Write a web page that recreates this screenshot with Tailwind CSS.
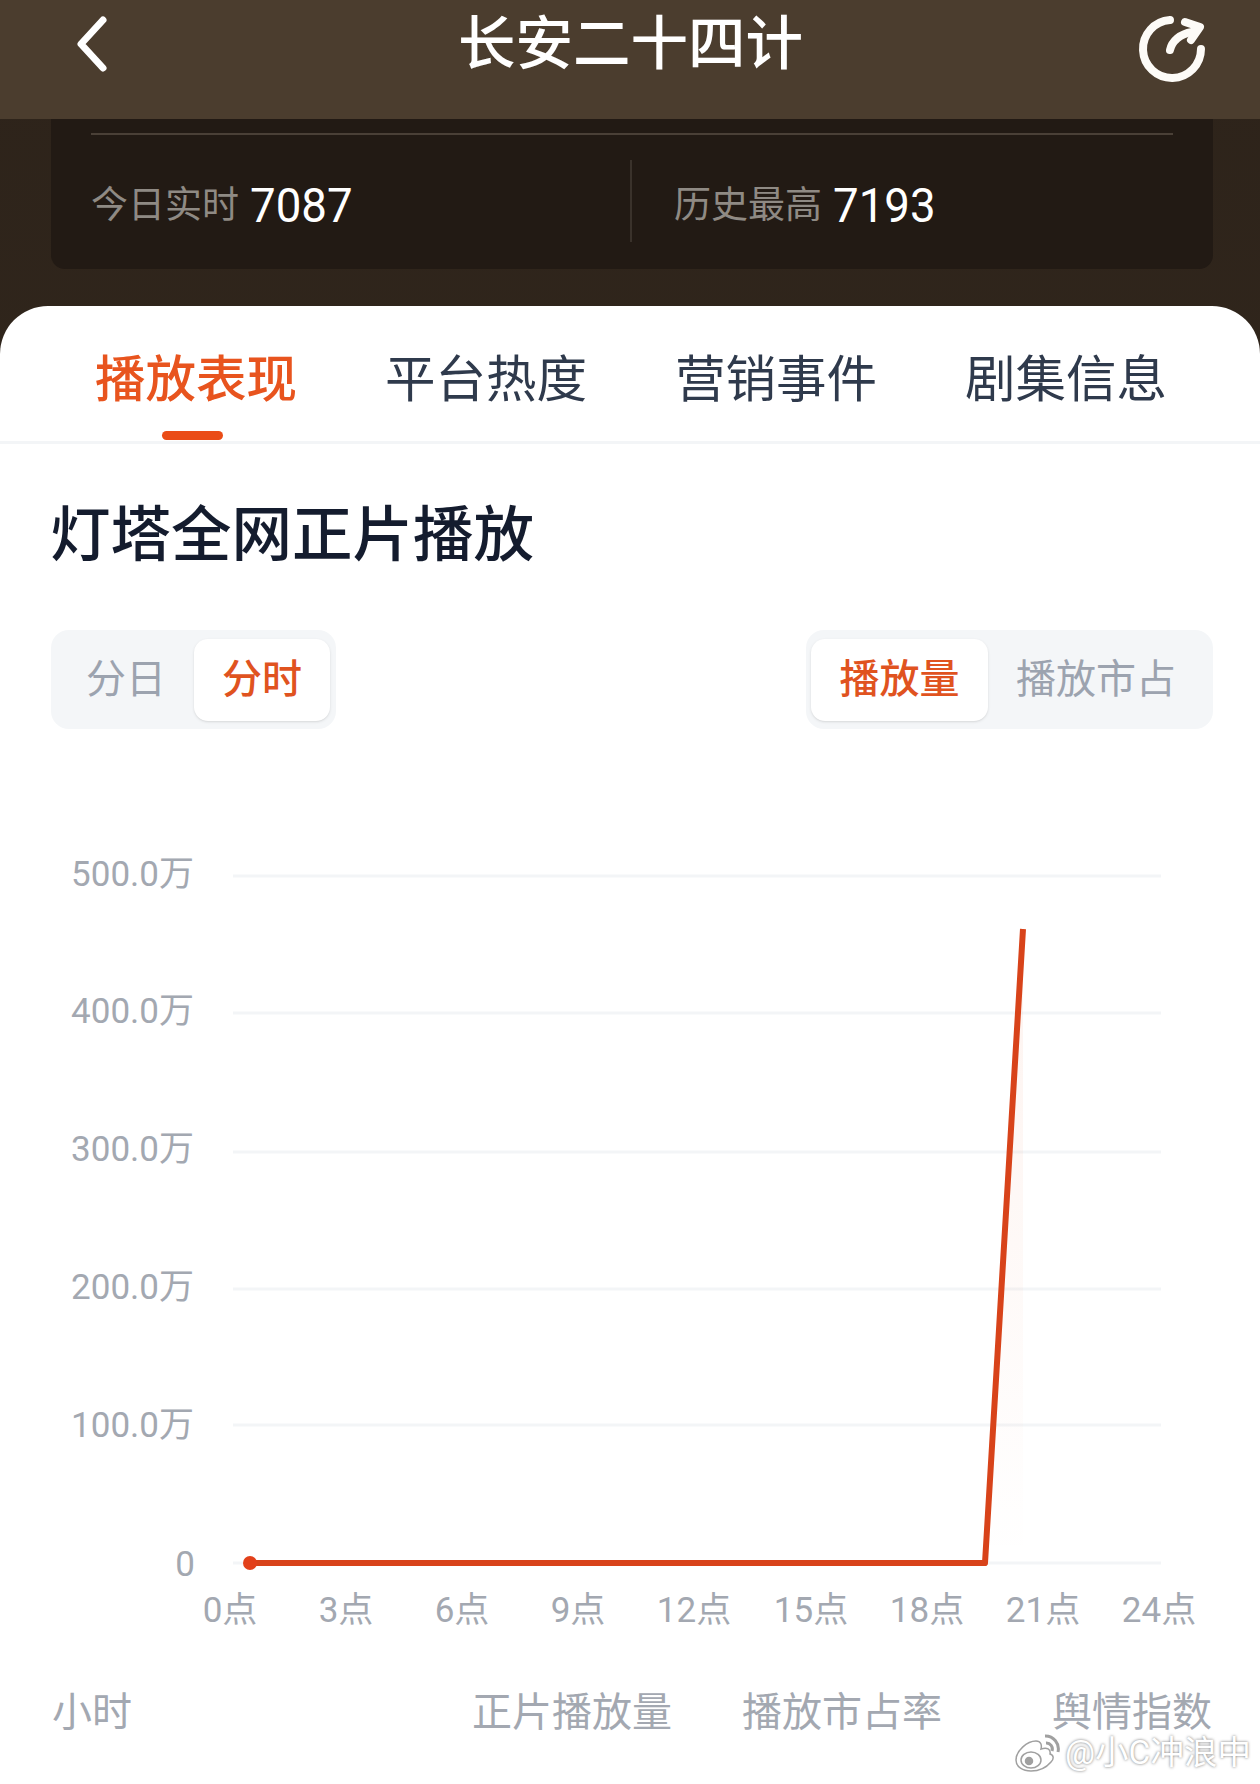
<!DOCTYPE html>
<html lang="zh-CN">
<head>
  <meta charset="UTF-8">
  <title>长安二十四计</title>
  <script src="https://cdn.jsdelivr.net/npm/@tailwindcss/browser@4"></script>
</head>
<body class="font-['Roboto','Noto_Sans_CJK_SC',sans-serif]">
  <div class="relative w-[1260px] h-[1784px] overflow-hidden bg-gradient-to-b from-[#2d231a] to-[#3a2e22]">

    <!-- header -->
    <header class="relative z-10 h-[119px] bg-[#4b3d2e] flex items-start justify-between pl-[75px] pr-[52px] text-white">
      <svg class="mt-[15px]" width="34" height="58" viewBox="0 0 34 58" fill="none" stroke="#fff" stroke-width="7" stroke-linecap="round" stroke-linejoin="round"><path d="M28 5 L6 29 L28 53"/></svg>
      <h1 class="mt-[12px] ml-[16px] text-[57.5px] leading-[66px] font-medium">长安二十四计</h1>
      <svg class="mt-[13px]" width="72" height="72" viewBox="0 0 72 72" fill="none" stroke="#fdfbf7" stroke-width="8" stroke-linecap="round" stroke-linejoin="round"><path d="M34 7 A29 29 0 1 0 65 36"/><path d="M34 37 C36 28 44 21 56 19"/><path d="M49 9 L64 14 L55 27"/></svg>
    </header>

    <!-- stats card -->
    <section class="ml-[51px] mr-[47px] h-[150px] bg-[#221a14] rounded-b-[14px] px-[40px]">
      <div class="h-[16px] border-b-2 border-[#4a4037]"></div>
      <div class="flex items-center h-[134px] pb-[2px]">
        <div class="flex items-center w-[541px] h-[82px] pt-[10px] border-r-2 border-[#3a322b]">
          <span class="text-[37px] text-[#8f8a84]">今日实时</span>
          <span class="ml-[11px] text-[48px] leading-none text-white scale-x-95 origin-left">7087</span>
        </div>
        <div class="flex items-center h-[82px] pt-[10px] pl-[42px]">
          <span class="text-[37px] text-[#8f8a84]">历史最高</span>
          <span class="ml-[11px] text-[48px] leading-none text-white scale-x-95 origin-left">7193</span>
        </div>
      </div>
    </section>

    <!-- white panel -->
    <main class="mt-[37px] h-[1478px] bg-white rounded-t-[48px]">
      <nav class="relative h-[138px] border-b-[3px] border-[#f3f5f7] flex items-center pl-[95px] gap-[88px] text-[50.5px] text-[#2f3a4c] pt-[12px]">
        <span class="text-[#e8541e] font-medium">播放表现</span>
        <span>平台热度</span>
        <span>营销事件</span>
        <span>剧集信息</span>
        <div class="absolute left-[162px] bottom-[1px] w-[61px] h-[9px] rounded-full bg-[#ea4c17]"></div>
      </nav>

      <h2 class="mt-[52px] ml-[50px] text-[60.5px] leading-[80px] font-medium text-[#141c2e]">灯塔全网正片播放</h2>

      <div class="mt-[54px] ml-[51px] mr-[47px] flex justify-between text-[40px] text-[#9ca3af]">
        <div class="flex items-center w-[285px] h-[99px] rounded-[18px] bg-[#f4f6f8] pl-[35px]">
          <span>分日</span>
          <span class="ml-[28px] w-[136px] h-[82px] flex items-center justify-center rounded-[14px] bg-white shadow-sm text-[#e0531f] font-medium">分时</span>
        </div>
        <div class="flex items-center w-[407px] h-[99px] rounded-[18px] bg-[#f4f6f8] pl-[5px]">
          <span class="w-[177px] h-[82px] flex items-center justify-center rounded-[14px] bg-white shadow-sm text-[#e0531f] font-medium">播放量</span>
          <span class="ml-[28px]">播放市占</span>
        </div>
      </div>

      <!-- chart -->
      <svg class="mt-[118px] block" width="1260" height="802" viewBox="0 848 1260 802">
        <defs>
          <linearGradient id="area" x1="0" y1="0" x2="0" y2="1">
            <stop offset="0" stop-color="#e8541e" stop-opacity="0.07"/>
            <stop offset="1" stop-color="#e8541e" stop-opacity="0"/>
          </linearGradient>
        </defs>
        <g stroke="#f3f5f7" stroke-width="3">
          <line x1="233" x2="1161" y1="877" y2="877"/>
          <line x1="233" x2="1161" y1="1014" y2="1014"/>
          <line x1="233" x2="1161" y1="1153" y2="1153"/>
          <line x1="233" x2="1161" y1="1290" y2="1290"/>
          <line x1="233" x2="1161" y1="1426" y2="1426"/>
          <line x1="233" x2="1161" y1="1564" y2="1564"/>
        </g>
        <path d="M985 1564 L1023 930 L1023 1564 Z" fill="url(#area)"/>
        <path d="M249 1564 L985 1564 L1023 930" fill="none" stroke="#d8431a" stroke-width="6" stroke-linejoin="round"/>
        <circle cx="250" cy="1564" r="7" fill="#e2401a"/>
        <g fill="#a3a8b1" font-size="35" text-anchor="end">
          <text x="194" y="887">500.0万</text>
          <text x="194" y="1024">400.0万</text>
          <text x="194" y="1162">300.0万</text>
          <text x="194" y="1300">200.0万</text>
          <text x="194" y="1438">100.0万</text>
          <text x="195" y="1577">0</text>
        </g>
        <g fill="#a3a8b1" font-size="35" text-anchor="middle">
          <text x="230" y="1623">0点</text>
          <text x="346" y="1623">3点</text>
          <text x="462" y="1623">6点</text>
          <text x="578" y="1623">9点</text>
          <text x="694" y="1623">12点</text>
          <text x="811" y="1623">15点</text>
          <text x="927" y="1623">18点</text>
          <text x="1043" y="1623">21点</text>
          <text x="1159" y="1623">24点</text>
        </g>
      </svg>

      <!-- table head -->
      <div class="mt-[38px] pl-[52px] flex text-[40px] leading-[52px] text-[#a3a8b1]">
        <span class="w-[420px]">小时</span>
        <span class="w-[270px]">正片播放量</span>
        <span class="w-[310px]">播放市占率</span>
        <span>舆情指数</span>
      </div>
    </main>

    <!-- watermark -->
    <div class="absolute left-[1013px] top-[1733px] flex items-center text-[33.5px] leading-[40px] text-white [text-shadow:0_0_3px_#6f6f6f]">
      <svg width="48" height="40" viewBox="0 0 48 40" fill="#fff" stroke="#a0a0a0" stroke-width="1.5"><path d="M3 27 C3 18 14 8 23 8 C28 8 29 12 28 16 C34 14 38 16 37 21 C41 22 41 26 38 29 C33 35 25 38 18 38 C10 38 3 34 3 27 Z"/><ellipse cx="18" cy="27" rx="10" ry="8" fill="none"/><circle cx="16" cy="28" r="3.5" fill="#a0a0a0"/><path d="M32 3 A13 13 0 0 1 45 19" fill="none" stroke-width="3"/><path d="M33 10 A6 6 0 0 1 39 18" fill="none" stroke-width="3"/></svg>
      <span class="ml-[4px]">@小C冲浪中</span>
    </div>
  </div>
</body>
</html>
